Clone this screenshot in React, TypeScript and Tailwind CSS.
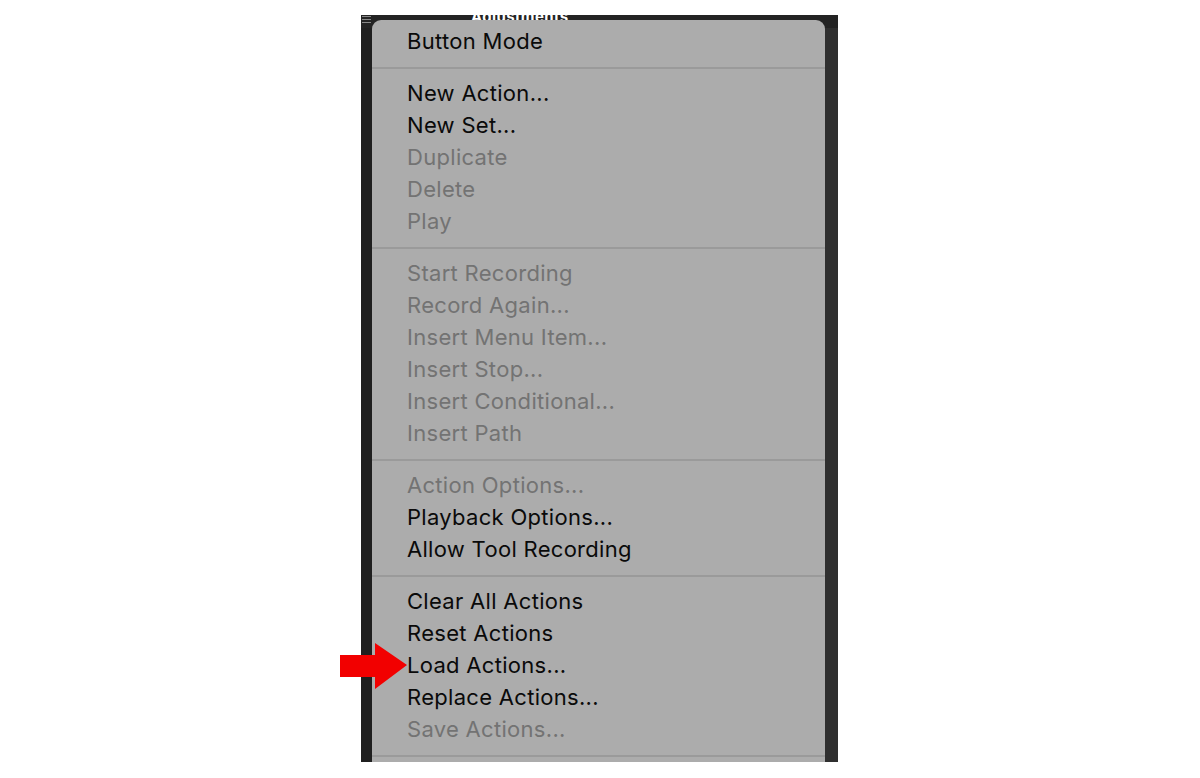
type Item = { label: string; disabled?: boolean } | "sep";

const items: Item[] = [
  { label: "Button Mode" },
  "sep",
  { label: "New Action..." },
  { label: "New Set..." },
  { label: "Duplicate", disabled: true },
  { label: "Delete", disabled: true },
  { label: "Play", disabled: true },
  "sep",
  { label: "Start Recording", disabled: true },
  { label: "Record Again...", disabled: true },
  { label: "Insert Menu Item...", disabled: true },
  { label: "Insert Stop...", disabled: true },
  { label: "Insert Conditional...", disabled: true },
  { label: "Insert Path", disabled: true },
  "sep",
  { label: "Action Options...", disabled: true },
  { label: "Playback Options..." },
  { label: "Allow Tool Recording" },
  "sep",
  { label: "Clear All Actions" },
  { label: "Reset Actions" },
  { label: "Load Actions..." },
  { label: "Replace Actions..." },
  { label: "Save Actions...", disabled: true },
  "sep",
];

function RedArrow() {
  return (
    <svg className="absolute left-[340px] top-[643px]" width="68" height="46" viewBox="0 0 68 46">
      <path d="M0 12 H35 V0 L67 22 L35 46 V34 H0 Z" fill="#f20000" />
    </svg>
  );
}

export default function App() {
  return (
    <div
      className="relative w-[1200px] h-[778px] bg-white overflow-hidden"
      style={{ fontFamily: "Inter, 'Liberation Sans', sans-serif" }}
    >
      <div className="pt-[15px] pl-[361px]">
        <div className="relative w-[477px] h-[747px] bg-[#2c2c2c] overflow-hidden">
          {/* panel header, mostly hidden behind the menu */}
          <div className="flex h-[13px] bg-[#232323] overflow-hidden">
            <div className="flex flex-col gap-[2px] pt-[1px] pl-[1px] w-[10px]">
              <div className="h-[1px] bg-[#888]" />
              <div className="h-[1px] bg-[#888]" />
              <div className="h-[1px] bg-[#888]" />
            </div>
            <div className="ml-[100px] -mt-[9px] text-[15px] font-bold text-white tracking-wide">
              Adjustments
            </div>
          </div>
          <div className="flex h-full">
            <div className="w-[11px] bg-[#1f1f1f]" />
            <div className="flex-1" />
            <div className="w-[13px] bg-[#2f2f2f]" />
          </div>

          {/* context menu */}
          <div className="absolute left-[11px] top-[5px] w-[453px] bg-[#acacac] rounded-t-[9px] pt-[5px] pb-[20px]">
            {items.map((it, i) =>
              it === "sep" ? (
                <div key={i} className="h-[20px] pt-[10px]">
                  <div className="h-[2px] bg-[#9a9a9a]" />
                </div>
              ) : (
                <div
                  key={i}
                  className={
                    "h-[32px] pl-[35px] flex items-center text-[22px] tracking-[0.3px] leading-none " +
                    (it.disabled ? "text-[#737373]" : "text-[#0a0a0a]")
                  }
                >
                  {it.label}
                </div>
              )
            )}
          </div>
        </div>
      </div>
      <RedArrow />
    </div>
  );
}
